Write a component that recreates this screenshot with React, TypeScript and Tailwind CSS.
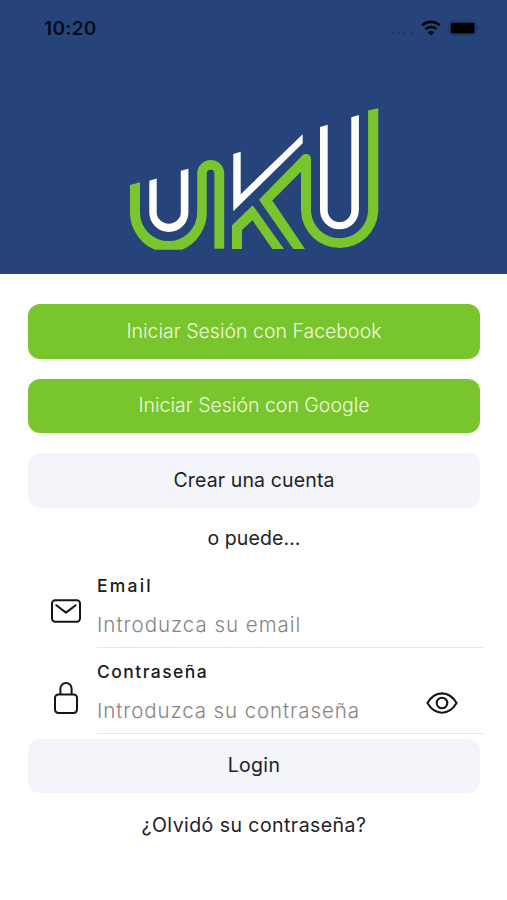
import type { ReactNode } from 'react'

interface ButtonProps {
  label: string
  variant?: 'primary' | 'light'
  textClass: string
}

interface FieldProps {
  label: string
  placeholder: string
  type: string
  labelClass: string
  inputClass: string
  icon: ReactNode
  action?: ReactNode
}

function StatusBar() {
  return (
    <div className="flex h-[58px] items-center justify-between pl-[44px] pr-[27px]">
      <span className="text-[19px] leading-6 font-semibold tracking-[0.35px] text-[#030a1c]">10:20</span>
      <div className="flex items-center pb-[2px]">
        <svg className="mr-[7px] mt-[10px] h-[4px] w-[24px]" viewBox="0 0 24 4" fill="#1c3566">
          <circle cx="3" cy="2" r="1.2" />
          <circle cx="9" cy="2" r="1.2" />
          <circle cx="15" cy="2" r="1.2" />
          <circle cx="21" cy="2" r="1.2" />
        </svg>
        <svg className="mr-[7px] h-[16px] w-[20px]" viewBox="0 0 20 16" fill="none" stroke="#02060f">
          <path d="M1.2 5.4C6 .8 14 .8 18.8 5.4" strokeWidth="2.7" />
          <path d="M4.5 9.1C7.6 6.3 12.4 6.3 15.5 9.1" strokeWidth="2.6" />
          <path d="M10 15.5L6.7 12.2C8.5 10.5 11.5 10.5 13.3 12.2Z" fill="#02060f" stroke="none" />
        </svg>
        <svg className="h-[16px] w-[32px]" viewBox="0 0 32 16">
          <rect x="1" y="1.2" width="27" height="13.6" rx="4" fill="none" stroke="#1d3768" strokeWidth="1.2" />
          <rect x="2.6" y="2.8" width="24" height="10.6" rx="2.2" fill="#000" />
          <path d="M29.4 5.8C31.5 6.6 31.5 9.4 29.4 10.2Z" fill="#1d3768" />
        </svg>
      </div>
    </div>
  )
}

function Logo() {
  return (
    <svg className="h-[144px] w-[252px]" viewBox="128 107 252 144" role="img" aria-label="UKU">
      <g fill="#79c52e">
        <path d="M130 185L140 182.3V212.5A28.4 28.4 0 0 0 197.2 212.5V173.5A13.5 13.5 0 0 1 224.2 173.5V248.8H214.4V173.5A3.8 3.8 0 0 0 206.8 173.5V212.5C206.8 229.5 196 244 182 249.8H155C141 244 130 229.5 130 212.5Z" />
        <path d="M232 249V225.3L252.7 205.3L284 249H272.3L252.5 220.3L242 230V249Z" />
        <path d="M259 199.7L302.3 155.6C305.5 152.6 311 154.3 311 159.2V211.3A28.6 28.6 0 0 0 368.1 211.3V110.5L378.3 108.2V211.3A38.7 38.7 0 0 1 301 211.3V171.7L272.3 200.5L305 249H293.3Z" />
      </g>
      <g fill="#fff">
        <path d="M149.3 180.8L156.7 178.5V212.2A12 11.4 0 0 0 180.8 212.2V170.8L188.4 168.7V212.4A19.55 19.6 0 0 1 149.3 212.4Z" />
        <path d="M233.3 154L240.7 151.7V194.2L302.7 134.3V143.3L233.3 211.2Z" />
        <path d="M320 127L327.7 124.7V210.3A11.8 11.8 0 0 0 351.3 210.3V117.3L358.9 115V210A19.45 19.4 0 0 1 320 210Z" />
      </g>
    </svg>
  )
}

function MailIcon() {
  return (
    <svg className="h-[24px] w-[30px]" viewBox="0 0 30 24" fill="none" stroke="#151515" strokeWidth="2" strokeLinejoin="round" strokeLinecap="round">
      <rect x="1" y="1.2" width="28" height="21.6" rx="3.2" />
      <path d="M5.3 6.2L15 13.6L24.7 6.2" />
    </svg>
  )
}

function LockIcon() {
  return (
    <svg className="mt-[2px] h-[32px] w-[24px]" viewBox="0 0 24 32" fill="none" stroke="#151515" strokeWidth="2" strokeLinejoin="round">
      <rect x="1" y="12.4" width="22" height="18.6" rx="3.4" />
      <path d="M6.4 12.4V6.6A5.6 5.6 0 0 1 17.6 6.6V12.4" />
    </svg>
  )
}

function EyeIcon() {
  return (
    <svg className="h-[22px] w-[32px]" viewBox="0 0 32 22" fill="none" stroke="#151515" strokeWidth="2.1" strokeLinejoin="round">
      <path d="M1.4 11C9.2-1.9 22.8-1.9 30.6 11C22.8 23.9 9.2 23.9 1.4 11Z" />
      <circle cx="16" cy="11" r="5.3" />
    </svg>
  )
}

function Button({ label, variant = 'light', textClass }: ButtonProps) {
  const colors = variant === 'primary' ? 'bg-[#79c52e] text-[#effbdd]' : 'bg-[#f3f5fa] text-[#222226]'
  return (
    <button className={`flex h-[54.5px] w-full items-center justify-center rounded-xl ${colors}`}>
      <span className={`whitespace-nowrap ${textClass}`}>{label}</span>
    </button>
  )
}

function Field({ label, placeholder, type, labelClass, inputClass, icon, action }: FieldProps) {
  return (
    <div className="flex h-[86px]">
      <div className="flex w-[30px] shrink-0 items-center justify-center pt-[12px]">{icon}</div>
      <label className="ml-[16px] flex flex-1 flex-col border-b border-[#e7e7e9]">
        <span className={`mt-[13px] text-[17.5px] leading-[22px] font-medium text-[#1b1b1b] ${labelClass}`}>{label}</span>
        <span className="mt-[12px] flex h-[34px] items-center">
          <input
            type={type}
            placeholder={placeholder}
            className={`w-0 flex-1 text-[20.5px] font-[350] outline-none placeholder:text-[#858585] ${inputClass}`}
          />
          {action}
        </span>
      </label>
    </div>
  )
}

export default function App() {
  return (
    <div className="h-[900px] w-[507px] overflow-hidden bg-white font-['Inter',sans-serif]">
      <header className="h-[274px] bg-[#27447a]">
        <StatusBar />
        <div className="mt-[49px] flex justify-center">
          <Logo />
        </div>
      </header>
      <main className="pl-[28px] pr-[27px] pt-[30px]">
        <div className="flex flex-col gap-5">
          <Button label="Iniciar Sesión con Facebook" variant="primary" textClass="text-[19.5px] font-[350]" />
          <Button label="Iniciar Sesión con Google" variant="primary" textClass="text-[19.5px] font-[350]" />
          <Button label="Crear una cuenta" textClass="text-[19.5px] tracking-[0.13px]" />
        </div>
        <p className="mt-[16px] text-center text-[19.5px] leading-7 tracking-[0.1px] text-[#222226]">o puede...</p>
        <form className="-mr-[4px] ml-[23px] mt-[10px]">
          <Field
            label="Email"
            type="email"
            placeholder="Introduzca su email"
            labelClass="tracking-[2.2px]"
            inputClass="tracking-[0.98px]"
            icon={<MailIcon />}
          />
          <Field
            label="Contraseña"
            type="password"
            placeholder="Introduzca su contraseña"
            labelClass="tracking-[1.45px]"
            inputClass="tracking-[0.9px]"
            icon={<LockIcon />}
            action={<span className="mr-[26px] -mt-[18px]"><EyeIcon /></span>}
          />
        </form>
        <div className="mt-[5px]">
          <Button label="Login" textClass="text-[19.5px] tracking-[0.3px]" />
        </div>
        <p className="mt-[18px] text-center text-[19.5px] leading-7 tracking-[0.45px] text-[#222226]">¿Olvidó su contraseña?</p>
      </main>
    </div>
  )
}
